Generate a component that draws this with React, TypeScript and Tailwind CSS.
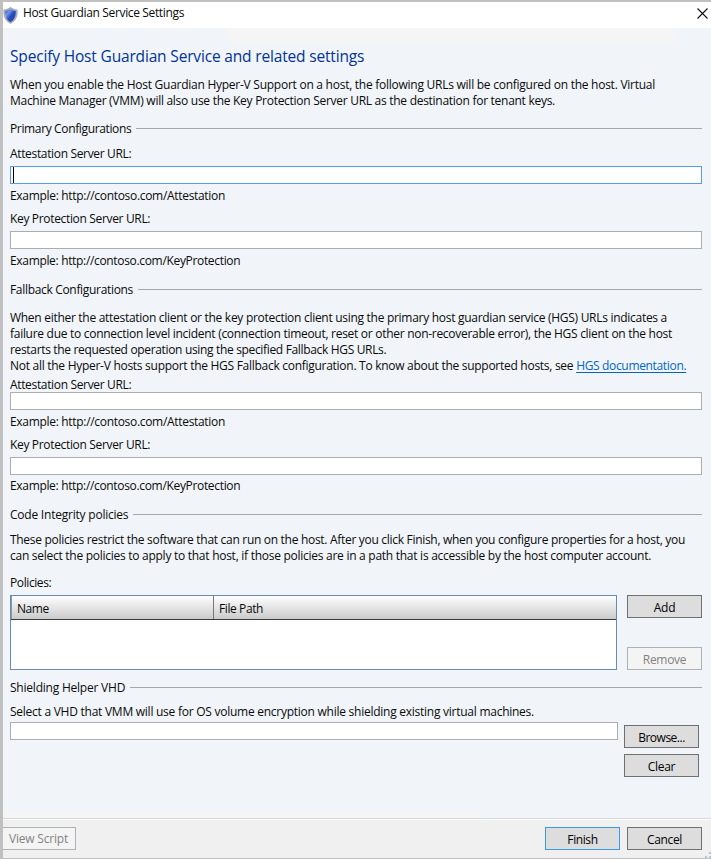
import type { ReactNode } from "react";

function Line({ children, className = "" }: { children: ReactNode; className?: string }) {
  return <div className={`h-4 leading-4 whitespace-pre ${className}`}>{children}</div>;
}

function Section({ title, className = "" }: { title: string; className?: string }) {
  return (
    <div className={`flex h-4 items-start leading-4 ${className}`}>
      <h2 className="whitespace-nowrap">{title}</h2>
      <div className="mt-[7px] ml-[5px] h-px flex-1 bg-[#a5a9ac]" />
    </div>
  );
}

function Field({ focused = false, className = "" }: { focused?: boolean; className?: string }) {
  return (
    <div
      className={`flex h-[18px] items-center border bg-white pl-[2px] ${focused ? "border-[#569de5]" : "border-[#abadb3]"} ${className}`}
    >
      {focused && <span className="h-4 w-px bg-black" />}
    </div>
  );
}

function Button({ children, kind = "normal", className = "" }: { children: ReactNode; kind?: "normal" | "default" | "disabled"; className?: string }) {
  const look =
    kind === "disabled"
      ? "border-[#adb2b5] bg-[#f4f4f4] text-[#838383]"
      : kind === "default"
        ? "border-[#3c99ea] bg-[#dddddd] text-black"
        : "border-[#707070] bg-[#dddddd] text-black";
  return (
    <button className={`flex h-[23px] w-[75px] shrink-0 items-center justify-center border pt-[2px] whitespace-nowrap ${look} ${className}`}>
      {children}
    </button>
  );
}

function ShieldIcon() {
  return (
    <svg width="15" height="17" viewBox="0 0 15 17" className="block">
      <defs>
        <linearGradient id="shield" x1="0" y1="0" x2="1" y2="1">
          <stop offset="0" stopColor="#3454ae" />
          <stop offset="0.3" stopColor="#6f92ea" />
          <stop offset="0.55" stopColor="#2848bd" />
          <stop offset="1" stopColor="#2a48b0" />
        </linearGradient>
      </defs>
      <path d="M7.5 .3C5.600 1.700 3.200 2.600.7 3c-.2 6 .9 10.500 6.800 13.500C13.400 13.500 14.500 9 14.300 3 11.800 2.600 9.400 1.700 7.500.3Z" fill="#a9afb9" stroke="#979da8" strokeWidth=".5" />
      <path d="M7.500 1.900C6 3 4.100 3.700 2.200 3.900c0 5 1.100 8.700 5.300 11.100 4.200-2.400 5.300-6.100 5.300-11.100C10.900 3.700 9 3 7.500 1.900Z" fill="url(#shield)" />
    </svg>
  );
}

export default function App() {
  return (
    <div className="relative flex h-[859px] w-[711px] flex-col overflow-hidden border-t-2 border-b border-l-3 border-[#c0c0c0] bg-[#f1f5f9] font-['Open_Sans',sans-serif] text-[12px] text-[#0a0a0a]">
      <header className="flex h-[26px] shrink-0 items-center justify-between bg-white pr-[3px]">
        <div className="flex items-center gap-[5px]">
          <ShieldIcon />
          <h1 className="-mt-[4px] tracking-[-0.357px]">Host Guardian Service Settings</h1>
        </div>
        <svg width="11" height="11" viewBox="0 0 11 11" className="mb-1 block">
          <path d="M.5 .5 10.500 10.500M10.500 .5 .5 10.500" stroke="#111" strokeWidth="1.100" fill="none" />
        </svg>
      </header>

      <main className="relative flex h-[790px] shrink-0 flex-col pr-[9px] pl-[7px]">
        <div className="absolute top-0 left-[225px] h-4 w-[448px] bg-[#f5f5f5]" />
        <div className="absolute bottom-0 left-0 h-[6px] w-[481px] bg-[#f5f5f5]" />
        <h2 className="relative mt-[18px] h-5 text-[15.5px] leading-5 tracking-[-0.167px] whitespace-nowrap text-[#003399]">
          Specify Host Guardian Service and related settings
        </h2>

        <Line className="mt-[11px] tracking-[-0.258px]">When you enable the Host Guardian Hyper-V Support on a host, the following URLs will be configured on the host. Virtual</Line>
        <Line className="tracking-[-0.279px]">Machine Manager (VMM) will also use the Key Protection Server URL as the destination for tenant keys.</Line>

        <Section title="Primary Configurations" className="mt-3 tracking-[-0.36px]" />
        <Line className="mt-[9px] tracking-[-0.34px]">Attestation Server URL:</Line>
        <Field focused className="mt-1" />
        <Line className="mt-1 tracking-[-0.311px]">Example: http://contoso.com/Attestation</Line>
        <Line className="mt-[7px] tracking-[-0.335px]">Key Protection Server URL:</Line>
        <Field className="mt-1" />
        <Line className="mt-1 tracking-[-0.33px]">Example: http://contoso.com/KeyProtection</Line>

        <Section title="Fallback Configurations" className="mt-[13px] tracking-[-0.32px]" />
        <Line className="mt-3 tracking-[-0.288px]">When either the attestation client or the key protection client using the primary host guardian service (HGS) URLs indicates a</Line>
        <Line className="tracking-[-0.286px]">failure due to connection level incident (connection timeout, reset or other non-recoverable error), the HGS client on the host</Line>
        <Line className="tracking-[-0.335px]">restarts the requested operation using the specified Fallback HGS URLs.</Line>
        <Line className="tracking-[-0.279px]">
          Not all the Hyper-V hosts support the HGS Fallback configuration. To know about the supported hosts, see{" "}
          <a className="tracking-[-0.335px] text-[#0066cc] underline underline-offset-2">HGS documentation.</a>
        </Line>
        <Line className="mt-[3px] -mb-px tracking-[-0.34px]">Attestation Server URL:</Line>
        <Field />
        <Line className="mt-1 tracking-[-0.311px]">Example: http://contoso.com/Attestation</Line>
        <Line className="mt-[7px] tracking-[-0.335px]">Key Protection Server URL:</Line>
        <Field className="mt-1" />
        <Line className="mt-[3px] tracking-[-0.33px]">Example: http://contoso.com/KeyProtection</Line>

        <Section title="Code Integrity policies" className="mt-[13px] tracking-[-0.22px]" />
        <Line className="mt-[9px] tracking-[-0.299px]">These policies restrict the software that can run on the host. After you click Finish, when you configure properties for a host, you</Line>
        <Line className="tracking-[-0.269px]">can select the policies to apply to that host, if those policies are in a path that is accessible by the host computer account.</Line>
        <Line className="mt-[11px] tracking-[-0.4px]">Policies:</Line>

        <div className="mt-1 flex h-[75px] justify-between">
          <div className="w-[607px] border border-[#688caf] bg-white">
            <div className="flex h-6 border-b border-[#3c3c3c] bg-linear-to-b from-white to-[#cbcbcb] pt-px leading-6">
              <div className="-mt-px w-[203px] border-r border-[#777] border-l border-l-[#8d98a5] pt-px pl-[5px] tracking-[-0.45px]">Name</div>
              <div className="pl-[5px] tracking-[-0.4px]">File Path</div>
            </div>
          </div>
          <div className="flex flex-col justify-between">
            <Button className="tracking-[-0.2px]">Add</Button>
            <Button kind="disabled" className="tracking-[-0.3px]">Remove</Button>
          </div>
        </div>

        <Section title="Shielding Helper VHD" className="mt-[10px] tracking-[-0.22px]" />
        <Line className="mt-2 tracking-[-0.255px]">Select a VHD that VMM will use for OS volume encryption while shielding existing virtual machines.</Line>
        <div className="mt-[2px] flex gap-[6px]">
          <Field className="w-[608px]" />
          <div className="mt-[3px] flex flex-col gap-[6px]">
            <Button className="tracking-[-0.5px]">Browse...</Button>
            <Button className="tracking-[-0.3px]">Clear</Button>
          </div>
        </div>
      </main>

      <footer className="flex flex-1 items-start border-t border-[#d5d8da] bg-[#f0f0f0] shadow-[inset_0_1px_0_#fff]">
        <div className="mt-2 flex h-[23px] w-[73px] items-center border border-l-0 border-[#adb2b5] bg-[#f4f4f4] pt-px pl-[6px] tracking-[-0.2px] text-[#838383]">View Script</div>
        <div className="mt-2 mr-[9px] ml-auto flex gap-[7px]">
          <Button kind="default" className="tracking-[-0.4px]">Finish</Button>
          <Button className="tracking-[-0.35px]">Cancel</Button>
        </div>
      </footer>
      <svg width="6" height="6" viewBox="0 0 6 6" className="absolute right-0 bottom-0">
        <path d="M4 0h2v2H4zM0 4h2v2H0zM4 4h2v2H4z" fill="#bcc3d0" />
      </svg>
    </div>
  );
}
